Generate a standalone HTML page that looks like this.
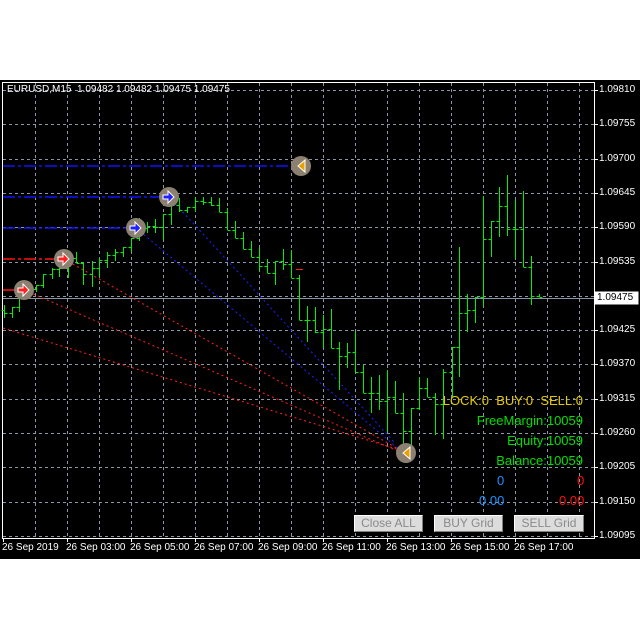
<!DOCTYPE html>
<html><head><meta charset="utf-8"><style>
body{margin:0;background:#fff;width:640px;height:640px;overflow:hidden;font-family:"Liberation Sans",sans-serif}
#c{position:absolute;left:0;top:80px;width:640px;height:479px;background:#000}
svg{position:absolute;left:0;top:0}
.t{position:absolute;font-size:12px;white-space:nowrap}
.btn{position:absolute;top:515px;height:15px;background:#dcdcdc;border:1px solid #fff;border-right-color:#808080;border-bottom-color:#808080;color:#8a8a8a;font-size:12px;line-height:15px;text-align:center;box-sizing:border-box;height:17px}
</style></head><body>
<div id="c"></div>
<svg width="640" height="640" id="s">
<g stroke="#8a96a6" stroke-dasharray="3,3" stroke-width="1">
<path id="grid" d=""/>
</g>
<rect x="2.5" y="82.5" width="592" height="456" fill="none" stroke="#fff"/>
<line x1="3" y1="298.5" x2="594" y2="298.5" stroke="#8a96a6"/>
<g stroke-width="1.5" fill="none">
<line x1="3" y1="166" x2="300" y2="166" stroke="#1010ff" stroke-dasharray="12,3,3,3"/>
<line x1="3" y1="197" x2="169" y2="197" stroke="#1010ff" stroke-dasharray="12,3,3,3"/>
<line x1="3" y1="228" x2="136" y2="228" stroke="#1010ff" stroke-dasharray="12,3,3,3"/>
<line x1="3" y1="259" x2="64" y2="259" stroke="#ff1010" stroke-dasharray="12,3,3,3"/>
<line x1="3" y1="290" x2="24" y2="290" stroke="#ff1010" stroke-dasharray="12,3,3,3"/>
</g>
<g stroke-width="1" stroke-dasharray="2,3" fill="none">
<line x1="169" y1="197" x2="395" y2="443" stroke="#2020ff"/>
<line x1="136" y1="228" x2="400" y2="450" stroke="#2020ff"/>
<line x1="64" y1="259" x2="400" y2="450" stroke="#ff2020"/>
<line x1="24" y1="290" x2="400" y2="452" stroke="#ff2020"/>
<line x1="3" y1="328" x2="400" y2="450" stroke="#ff2020"/>
</g>
<line x1="296" y1="269.5" x2="303" y2="269.5" stroke="#ff2020" stroke-width="1"/>
<path id="bars" d="" stroke="#00ee00" stroke-width="1" fill="none"/>
<g>
<circle cx="24" cy="290" r="10" fill="#8c8070"/><path d="M18 288h5v-4l6 6-6 6v-4h-5z" fill="#ff2020" stroke="#fff" stroke-width="1"/>
<circle cx="64" cy="259" r="10" fill="#8c8070"/><path d="M58 257h5v-4l6 6-6 6v-4h-5z" fill="#ff2020" stroke="#fff" stroke-width="1"/>
<circle cx="136" cy="228" r="10" fill="#8c8070"/><path d="M130 226h5v-4l6 6-6 6v-4h-5z" fill="#2020ff" stroke="#fff" stroke-width="1"/>
<circle cx="169" cy="197" r="10" fill="#8c8070"/><path d="M163 195h5v-4l6 6-6 6v-4h-5z" fill="#2020ff" stroke="#fff" stroke-width="1"/>
<circle cx="301" cy="166" r="10" fill="#8c8070"/><path d="M305 160v12l-7-6z" fill="#e8a000" stroke="#fff" stroke-width="1"/>
<circle cx="406" cy="453" r="10" fill="#8c8070"/><path d="M410 447v12l-7-6z" fill="#e8a000" stroke="#fff" stroke-width="1"/>
</g>
<g stroke="#fff"><path id="ticks" d=""/></g>
<rect x="594.5" y="291.5" width="44" height="13" fill="#fff"/>
</svg>
<div class="t" style="left:7px;top:84px;color:#fff;font-size:10px">EURUSD,M15&nbsp; 1.09482 1.09482 1.09475 1.09475</div>
<div id="prices"></div>
<div class="t" style="left:597px;top:292px;color:#000;font-size:10px">1.09475</div>
<div class="t" style="right:57px;top:393px;color:#e6c800;font-size:13px">LOCK:0&nbsp; BUY:0&nbsp; SELL:0</div>
<div class="t" style="right:57px;top:413px;color:#00e000;font-size:13px">FreeMargin:10059</div>
<div class="t" style="right:57px;top:433px;color:#00e000;font-size:13px">Equity:10059</div>
<div class="t" style="right:57px;top:453px;color:#00e000;font-size:13px">Balance:10059</div>
<div class="t" style="left:497px;top:473px;color:#1e90ff;font-size:13px">0</div>
<div class="t" style="left:577px;top:473px;color:#ff1010;font-size:13px">0</div>
<div class="t" style="left:479px;top:493px;color:#1e90ff;font-size:13px">0.00</div>
<div class="t" style="left:559px;top:493px;color:#ff1010;font-size:13px">0.00</div>
<div class="btn" style="left:354px;width:69px">Close ALL</div>
<div class="btn" style="left:434px;width:69px">BUY Grid</div>
<div class="btn" style="left:514px;width:70px">SELL Grid</div>
<div id="times"></div>
<script>
var g="";for(var x=35;x<594;x+=32)g+="M"+(x+.5)+" 83V538";
var ys=[90,124.3,158.6,192.9,227.2,261.5,295.8,330.1,364.4,398.7,433,467.3,501.6,535.9];
ys.forEach(function(y){g+="M3 "+(Math.round(y)+.5)+"H594"});
document.getElementById("grid").setAttribute("d",g);
var pr=["1.09810","1.09755","1.09700","1.09645","1.09590","1.09535","1.09480","1.09425","1.09370","1.09315","1.09260","1.09205","1.09150","1.09095"];
var h="",tk="";
ys.forEach(function(y,i){if(i!=6)h+='<div class="t" style="left:599px;top:'+(Math.round(y)-6)+'px;color:#fff;font-size:10px">'+pr[i]+'</div>';tk+="M594 "+(Math.round(y)+.5)+"h4"});
document.getElementById("prices").innerHTML=h;
var tl=["26 Sep 2019","26 Sep 03:00","26 Sep 05:00","26 Sep 07:00","26 Sep 09:00","26 Sep 11:00","26 Sep 13:00","26 Sep 15:00","26 Sep 17:00"];
var th="";tl.forEach(function(s,i){th+='<div class="t" style="left:'+(2+64*i)+'px;top:542px;color:#fff;font-size:10px">'+s+'</div>';tk+="M"+(3+64*i+.5)+" 538v4"});
document.getElementById("times").innerHTML=th;
document.getElementById("ticks").setAttribute("d",tk);
var b=[[4,305,318],[12,307,318],[19,298,312],[27,288,295],[36,285,292],[43,274,288],[52,268,279],[59,260,277],[68,257,278],[76,252,263],[83,262,285],[92,261,287],[99,258,277],[107,252,268],[115,249,261],[123,247,257],[131,238,252],[139,218,241],[147,222,233],[155,219,233],[163,214,240],[171,188,225],[179,198,212],[187,207,213],[195,197,211],[203,197,205],[211,197,206],[219,198,212],[227,208,230],[235,221,238],[243,232,249],[251,241,257],[259,248,271],[267,259,273],[275,261,285],[283,249,270],[291,250,278],[299,275,320],[307,306,342],[315,307,333],[323,315,348],[331,309,348],[339,342,390],[347,343,368],[355,332,372],[363,365,393],[371,377,413],[379,375,410],[387,370,432],[395,381,413],[403,393,453],[411,408,453],[419,377,410],[427,378,397],[435,393,435],[443,369,439],[452,347,397],[459,247,377],[467,294,332],[475,297,323],[483,196,306],[491,221,257],[499,187,237],[507,175,236],[515,200,258],[523,191,267],[531,256,305],[539,294,297]];
var d="",pc=b[0][1]+5;
for(var i=0;i<b.length;i++){var x=b[i][0]+.5,hi=b[i][1],lo=b[i][2];var nc=i+1<b.length?(b[i+1][1]+b[i+1][2])/2:lo;var c=Math.max(hi,Math.min(lo,Math.round(nc)));var o=Math.max(hi,Math.min(lo,Math.round(pc)));d+="M"+x+" "+hi+"V"+lo+"M"+(x-3)+" "+(o+.5)+"H"+x+"M"+x+" "+(c+.5)+"H"+(x+3);pc=c;}
document.getElementById("bars").setAttribute("d",d);
</script>
</body></html>
